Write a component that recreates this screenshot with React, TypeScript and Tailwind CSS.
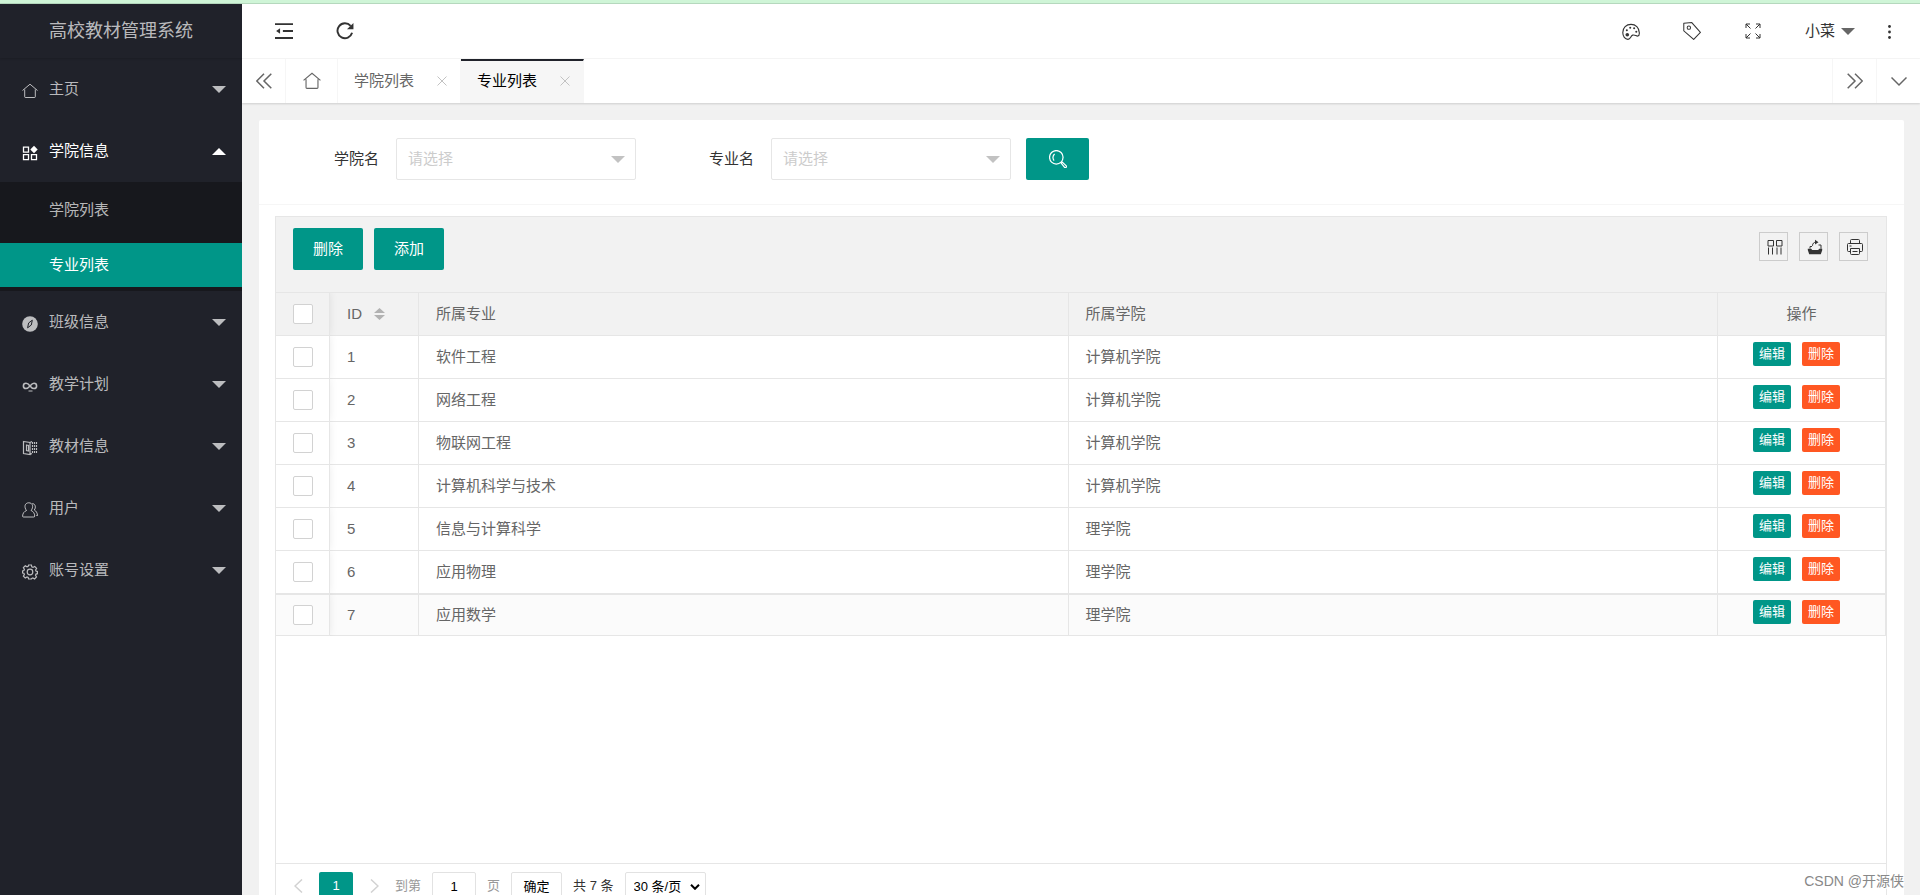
import React, { useState } from 'react';

interface Major {
  id: number;
  name: string;
  college: string;
}

interface MenuItem {
  title: string;
  icon: React.ReactNode;
  open?: boolean;
  children?: string[];
}

const majors: Major[] = [
  { id: 1, name: '软件工程', college: '计算机学院' },
  { id: 2, name: '网络工程', college: '计算机学院' },
  { id: 3, name: '物联网工程', college: '计算机学院' },
  { id: 4, name: '计算机科学与技术', college: '计算机学院' },
  { id: 5, name: '信息与计算科学', college: '理学院' },
  { id: 6, name: '应用物理', college: '理学院' },
  { id: 7, name: '应用数学', college: '理学院' },
];

const Svg = ({ size = 16, w = 1, children }: { size?: number; w?: number; children: React.ReactNode }) => (
  <svg
    width={size}
    height={size}
    viewBox="0 0 16 16"
    fill="none"
    stroke="currentColor"
    strokeWidth={w}
    className="shrink-0"
    aria-hidden="true"
  >
    {children}
  </svg>
);

const HomeIcon = ({ size = 16 }: { size?: number }) => (
  <Svg size={size}>
    <path d="M.5 7.500 8 1.200l7.500 6.300M2.700 6.500v7.200q0 .8.8.8h9q.8 0 .8-.8V6.500" />
  </Svg>
);

const Caret = ({ up = false, className = '' }: { up?: boolean; className?: string }) => (
  <svg width="14" height="7" viewBox="0 0 14 7" fill="currentColor" className={className} aria-hidden="true">
    <path d={up ? 'M0 7 7 0l7 7z' : 'M0 0h14L7 7z'} />
  </svg>
);

const menu: MenuItem[] = [
  { title: '主页', icon: <HomeIcon /> },
  {
    title: '学院信息',
    open: true,
    children: ['学院列表', '专业列表'],
    icon: (
      <Svg w={1.3}>
        <path d="M1.500 2.200h5v5h-5zM1.500 9.700h5v5h-5zM9.500 9.700h5v5h-5z" />
        <path d="m12 .8 3.700 3.700L12 8.200 8.300 4.500z" fill="currentColor" stroke="none" />
      </Svg>
    ),
  },
  {
    title: '班级信息',
    icon: (
      <Svg>
        <circle cx="8" cy="8" r="7.800" fill="currentColor" stroke="none" />
        <path d="m10.300 4.200-1 4.800-3.700 2.800 1-4.800z" stroke="#20222a" />
      </Svg>
    ),
  },
  {
    title: '教学计划',
    icon: (
      <Svg w={1.6}>
        <path d="M8 8C6.500 6 5.500 5.300 4 5.300a2.600 2.600 0 0 0 0 5.200c1.500 0 2.500-.8 4-2.500s2.500-2.700 4-2.700a2.600 2.600 0 0 1 0 5.200C10.500 10.500 9.500 10 8 8z" />
        <path d="M6.500 13h4" strokeWidth="1" />
      </Svg>
    ),
  },
  {
    title: '教材信息',
    icon: (
      <Svg w={1.2}>
        <path d="M1.500 1.500 8 2.500v12l-6.500-1zM4.500 5l2 .5v5.500l-2-.5zM8 2.500l2-1M8 14.500l2-1" />
        <path d="M10.500 2v12M12.500 2v12M14.500 2v12" strokeDasharray="2 1" />
      </Svg>
    ),
  },
  {
    title: '用户',
    icon: (
      <Svg>
        <path d="M4.500 8.500C1.800 5 2.800.8 6.800.8s5 4.200 2.300 7.700c2.200.9 3.600 3 3.600 5.500 0 .8-.3 1-1 1H1.500c-.7 0-1-.3-.9-1 .1-2.700 1.600-4.600 3.900-5.500z" />
        <path d="M10.300 1.500c3 .3 4 3.800 2 6.500 2 1 3 3 3.200 5.500h-1.200" />
      </Svg>
    ),
  },
  {
    title: '账号设置',
    icon: (
      <Svg w={1.2}>
        <path d="M6.600 1h2.800l.4 1.900 1.200.5 1.700-1 1.900 1.900-1 1.700.5 1.200 1.300.3v2.200l-1.400.4-.5 1.200 1 1.700-1.900 1.900-1.700-1-1.200.5L9.400 15H6.600l-.4-1.500-1.200-.5-1.700 1-1.900-1.900 1-1.700-.5-1.200L.6 9V7l1.300-.4.5-1.200-1-1.700 1.900-1.900 1.700 1 1.200-.5z" />
        <circle cx="8" cy="8" r="2.800" />
      </Svg>
    ),
  },
];

const Sidebar = () => (
  <aside className="flex w-[242px] shrink-0 flex-col bg-[#20222a] text-white/70">
    <h1 className="flex h-[54px] shrink-0 items-center justify-center text-lg shadow-[0_1px_2px_rgba(0,0,0,0.15)]">
      高校教材管理系统
    </h1>
    <nav>
      {menu.map((item) => (
        <div key={item.title}>
          <button
            type="button"
            className={`flex h-[62px] w-full items-center gap-[11px] pr-4 pl-[22px] ${item.open ? 'text-white' : ''}`}
          >
            <span className="pt-1">{item.icon}</span>
            <span>{item.title}</span>
            <Caret up={item.open} className="ml-auto" />
          </button>
          {item.children && (
            <div className="flex flex-col gap-[11px] bg-[#17181d] pt-[6px] pb-1">
              {item.children.map((child) => (
                <a
                  key={child}
                  href="#"
                  className={`flex h-11 items-center pl-[49px] ${child === '专业列表' ? 'bg-[#009688] text-white' : ''}`}
                >
                  {child}
                </a>
              ))}
            </div>
          )}
        </div>
      ))}
    </nav>
  </aside>
);

const TopBar = () => (
  <header className="flex h-[55px] shrink-0 items-center border-b border-[#f6f6f6] bg-white pr-[26px] pl-[33px] text-[#333]">
    <button type="button" aria-label="收起菜单">
      <Svg size={18} w={1.6}>
        <path d="M0 1.800h16M7 8h9M0 14.200h16" />
        <path d="M1 8l3.500-2.500v5z" fill="currentColor" stroke="none" />
      </Svg>
    </button>
    <button type="button" aria-label="刷新" className="ml-[43px]">
      <Svg size={18} w={1.7}>
        <path d="M14.300 9.500A6.600 6.600 0 1 1 13 3.500" />
        <path d="M15.500.8v5.700H9.800z" fill="currentColor" stroke="none" />
      </Svg>
    </button>
    <div className="ml-auto flex items-center">
      <button type="button" aria-label="主题" className="pt-[2px]">
        <Svg size={18}>
          <path d="M8 1.200C3.800 1.200.7 4.200.7 8.500c0 3.500 2 6 4.600 6 2.500 0 2.200-3 4.200-3.700 1.700-.6 3.200 1 4.600.8 1-.2 1.400-1.500 1.300-3C15.200 4.200 12.200 1.200 8 1.200z" />
          <g fill="currentColor" stroke="none">
            <circle cx="4.700" cy="10.500" r="1.600" />
            <circle cx="4.300" cy="6.500" r=".9" />
            <circle cx="7.300" cy="4.200" r=".9" />
            <circle cx="10.800" cy="4.700" r=".9" />
            <circle cx="12.700" cy="7.700" r=".9" />
          </g>
        </Svg>
      </button>
      <button type="button" aria-label="便签" className="ml-[43px]">
        <Svg size={18} w={0.9}>
          <path d="M.7 1.200 7.800.5l7.700 8.800-6 6.200L.7 7.800z" />
          <circle cx="5.200" cy="5" r="1.500" />
        </Svg>
      </button>
      <button type="button" aria-label="全屏" className="ml-11">
        <Svg size={16}>
          <path d="M1 5V1h4M1 1l4.500 4.500M11 1h4v4M15 1l-4.500 4.500M1 11v4h4M1 15l4.500-4.500M15 11v4h-4M15 15l-4.500-4.500" />
        </Svg>
      </button>
      <button type="button" className="ml-11 flex items-center gap-[6px]">
        小菜
        <Caret className="text-[#666]" />
      </button>
      <button type="button" aria-label="更多" className="ml-[30px] pt-[2px]">
        <svg width="9" height="16" viewBox="0 0 9 16" fill="currentColor" aria-hidden="true">
          <circle cx="4.500" cy="2.500" r="1.400" />
          <circle cx="4.500" cy="8" r="1.400" />
          <circle cx="4.500" cy="13.500" r="1.400" />
        </svg>
      </button>
    </div>
  </header>
);

const Tab = ({ title, active = false }: { title: string; active?: boolean }) => (
  <div
    className={`flex items-center border-r border-[#f6f6f6] pr-[13px] pl-4 ${
      active ? 'border-t-2 border-t-[#20222a] bg-[#f6f6f6] pb-[2px] text-black' : ''
    }`}
  >
    <a href="#">{title}</a>
    <button type="button" aria-label={`关闭${title}`} className="ml-[23px] text-[#c2c2c2]">
      <svg width="10" height="10" viewBox="0 0 10 10" stroke="currentColor" aria-hidden="true">
        <path d="M.5.5l9 9M9.500.5l-9 9" />
      </svg>
    </button>
  </div>
);

const TabBar = () => (
  <div className="z-10 flex h-11 shrink-0 bg-white text-[#666] shadow-[0_1px_2px_rgba(0,0,0,0.15)]">
    <button type="button" aria-label="向左" className="flex w-11 items-center justify-center border-r border-[#f6f6f6]">
      <Svg size={16} w={1.5}>
        <path d="M8 .7.800 8 8 15.300M15.300.7 8 8l7.300 7.300" />
      </Svg>
    </button>
    <a href="#" aria-label="主页" className="flex w-[52px] items-center justify-center border-r border-[#f6f6f6]">
      <HomeIcon size={18} />
    </a>
    <Tab title="学院列表" />
    <Tab title="专业列表" active />
    <button
      type="button"
      aria-label="向右"
      className="ml-auto flex w-11 items-center justify-center border-l border-[#f6f6f6]"
    >
      <Svg size={16} w={1.5}>
        <path d="M.7.7 8 8 .7 15.300M8 .7 15.300 8 8 15.300" />
      </Svg>
    </button>
    <button type="button" aria-label="标签操作" className="flex w-11 items-center justify-center border-l border-[#f6f6f6]">
      <Svg size={16} w={1.5}>
        <path d="M.5 4.500 8 12l7.500-7.500" />
      </Svg>
    </button>
  </div>
);

const FilterSelect = ({ id, label }: { id: string; label: string }) => (
  <div className="flex items-center gap-[17px]">
    <label htmlFor={id} className="text-[#333]">
      {label}
    </label>
    <div className="relative">
      <select
        id={id}
        className="h-[42px] w-60 appearance-none rounded-[2px] border border-[#e6e6e6] bg-white pl-[11px] text-[#ccc]"
      >
        <option>请选择</option>
      </select>
      <Caret className="pointer-events-none absolute top-[18px] right-[11px] text-[#c2c2c2]" />
    </div>
  </div>
);

const toolButton = 'flex size-[29px] items-center justify-center border border-[#ccc] pl-[3px] text-[#333]';
const bigButton = 'h-[42px] w-[70px] rounded-[2px] bg-[#009688] text-white';
const smallButton = 'h-6 rounded-[2px] px-[6px] text-[13px] leading-6 text-white';
const cell = 'border-r border-b border-[#e6e6e6] px-[17px] text-left font-normal';
const fixedCell =
  'border-r border-b border-[#e6e6e6] pl-[17px] shadow-[0_-1px_8px_rgba(0,0,0,0.08)] [clip-path:inset(0_-10px_0_0)]';
const checkbox = 'block size-5 appearance-none rounded-[2px] border border-[#d2d2d2] bg-white checked:bg-[#009688]';

const MajorTable = () => (
  <table className="w-full table-fixed border-separate border-spacing-0">
    <colgroup>
      <col className="w-[54px]" />
      <col className="w-[89px]" />
      <col />
      <col />
      <col className="w-[168px]" />
    </colgroup>
    <thead>
      <tr className="h-[43px] bg-[#f2f2f2]">
        <th className={fixedCell}>
          <input type="checkbox" aria-label="全选" className={checkbox} />
        </th>
        <th className={cell}>
          <button type="button" className="flex items-center gap-3">
            ID
            <svg width="11" height="12" viewBox="0 0 11 12" fill="#b2b2b2" aria-hidden="true">
              <path d="M0 5 5.500 0 11 5zM0 7h11l-5.500 5z" />
            </svg>
          </button>
        </th>
        <th className={cell}>所属专业</th>
        <th className={cell}>所属学院</th>
        <th className="border-r border-b border-[#e6e6e6] text-center font-normal">操作</th>
      </tr>
    </thead>
    <tbody>
      {majors.map((major) => (
        <tr key={major.id} className="h-[43px] last:h-[42px] last:bg-[#fbfbfb] last:*:border-t">
          <td className={fixedCell}>
            <input type="checkbox" aria-label={`选择${major.name}`} className={checkbox} />
          </td>
          <td className={cell}>{major.id}</td>
          <td className={cell}>{major.name}</td>
          <td className={cell}>{major.college}</td>
          <td className="border-r border-b border-[#e6e6e6]">
            <div className="flex justify-center gap-[11px] pr-[10px] pb-[6px]">
              <button type="button" className={`${smallButton} bg-[#009688]`}>
                编辑
              </button>
              <button type="button" className={`${smallButton} bg-[#ff5722]`}>
                删除
              </button>
            </div>
          </td>
        </tr>
      ))}
    </tbody>
  </table>
);

const Pager = () => {
  const [page, setPage] = useState('1');

  return (
    <div className="flex h-8 shrink-0 items-start border-t border-[#e6e6e6] pt-2 pl-[18px] text-[13px] text-[#999] *:shrink-0">
      <button type="button" aria-label="上一页" className="flex h-[27px] items-center text-[#d2d2d2]">
        <svg width="9" height="14" viewBox="0 0 9 14" fill="none" stroke="currentColor" strokeWidth="1.500" aria-hidden="true">
          <path d="M8 .5 1 7l7 6.500" />
        </svg>
      </button>
      <button type="button" className="ml-4 h-[27px] w-[34px] rounded-t-[2px] bg-[#009688] text-white">
        1
      </button>
      <button type="button" aria-label="下一页" className="ml-[17px] flex h-[27px] items-center text-[#d2d2d2]">
        <svg width="9" height="14" viewBox="0 0 9 14" fill="none" stroke="currentColor" strokeWidth="1.500" aria-hidden="true">
          <path d="m1 .5 7 6.500-7 6.500" />
        </svg>
      </button>
      <label htmlFor="page" className="ml-4 leading-[27px]">
        到第
      </label>
      <input
        id="page"
        type="text"
        value={page}
        onChange={(e) => setPage(e.target.value)}
        className="ml-[11px] h-[29px] w-11 rounded-[2px] border border-[#e2e2e2] bg-white text-center text-black"
      />
      <span className="ml-[11px] leading-[27px]">页</span>
      <button type="button" className="ml-[11px] h-[29px] w-[51px] rounded-[2px] border border-[#e2e2e2] bg-white text-black">
        确定
      </button>
      <span className="ml-[11px] leading-[27px] text-[#333]">共 7 条</span>
      <div className="relative ml-[11px]">
        <select
          aria-label="每页条数"
          className="h-[29px] w-[81px] appearance-none rounded-[2px] border border-[#e2e2e2] bg-white pl-2 text-black"
        >
          <option>30 条/页</option>
        </select>
        <svg
          width="10"
          height="6"
          viewBox="0 0 10 6"
          fill="none"
          stroke="#000"
          strokeWidth="2"
          className="pointer-events-none absolute top-3 right-[6px]"
          aria-hidden="true"
        >
          <path d="m1 .8 4 4 4-4" />
        </svg>
      </div>
    </div>
  );
};

const App: React.FC = () => {
  return (
    <div className="relative flex h-screen flex-col overflow-hidden bg-[#f1f1f1] font-['Liberation_Sans','Noto_Sans_CJK_SC',sans-serif] text-[15px] leading-6">
      <div className="h-1 shrink-0 border-b border-[#b5d8bd] bg-[#cff5d7]" />
      <div className="flex min-h-0 flex-1">
        <Sidebar />
        <main className="flex min-w-0 flex-1 flex-col">
          <TopBar />
          <TabBar />

          <section className="mt-[17px] mr-4 ml-[17px] flex min-h-0 flex-1 flex-col rounded-t-[2px] bg-white">
            {/* Filters */}
            <form className="flex items-center border-b border-[#f6f6f6] pt-[18px] pb-6 pl-[75px]">
              <FilterSelect id="college" label="学院名" />
              <div className="ml-[73px]">
                <FilterSelect id="major" label="专业名" />
              </div>
              <button
                type="button"
                aria-label="搜索"
                className="ml-[15px] flex h-[42px] w-[63px] items-center justify-center rounded-[2px] bg-[#009688] text-white"
              >
                <Svg size={18} w={1.1}>
                  <circle cx="6.500" cy="6.500" r="6" />
                  <path d="M5 3.500C3.300 4.800 3 7.500 4.500 9.500M10.800 11.700l1-1 3.500 3.300q.5 1-.2 1.500t-1.300 0z" />
                </Svg>
              </button>
            </form>

            <div className="mt-[11px] mr-[17px] ml-4 flex min-h-0 flex-1 flex-col border-x border-t border-[#e6e6e6] text-[#666]">
              {/* Toolbar */}
              <div className="flex h-[76px] shrink-0 items-start border-b border-[#e6e6e6] bg-[#f2f2f2] pr-[18px] pl-[17px]">
                <div className="flex gap-[11px] pt-[11px]">
                  <button type="button" className={bigButton}>
                    删除
                  </button>
                  <button type="button" className={bigButton}>
                    添加
                  </button>
                </div>
                <div className="ml-auto flex gap-[11px] pt-[15px]">
                  <button type="button" aria-label="筛选列" className={toolButton}>
                    <Svg size={16}>
                      <path d="M1 1.500h5.500v5.500H1zM9.500 1.500H15v5.500H9.500z" />
                      <path d="M1.500 8.500v7M5.500 8.500v7M10 8.500v7M14 8.500v7" />
                    </Svg>
                  </button>
                  <button type="button" aria-label="导出" className={toolButton}>
                    <Svg size={16}>
                      <path d="M.8 9.800h3.400l1 1.200h6l1-1.200h3v1.400l-1.400 4H2.200L.8 11z" fill="currentColor" stroke="none" />
                      <path d="M3 9.500V7.500h2M11.500 6H14v3.800M5.500 6.800C5.500 4.300 7 3.200 9 3.200" />
                      <path d="M8 .8 11.500 3.200 8 5.600z" fill="currentColor" stroke="none" />
                    </Svg>
                  </button>
                  <button type="button" aria-label="打印" className={toolButton}>
                    <Svg size={16}>
                      <path d="M3.500 4.500v-3q0-1 1-1h7q1 0 1 1v3M3.500 12.500h-2q-1 0-1-1v-6q0-1 1-1h13q1 0 1 1v6q0 1-1 1h-2" />
                      <path d="M3.500 9.500h9v5q0 1-1 1h-7q-1 0-1-1zM2.500 7h2M5.500 12.500h5" />
                    </Svg>
                  </button>
                </div>
              </div>

              <div className="min-h-0 flex-1 overflow-hidden">
                <MajorTable />
              </div>
              <Pager />
            </div>
          </section>
        </main>
      </div>

      <div className="absolute right-4 bottom-1 text-sm text-[#888] [text-shadow:1px_1px_0_#fff]">CSDN @开源侠</div>
    </div>
  );
};

export default App;
